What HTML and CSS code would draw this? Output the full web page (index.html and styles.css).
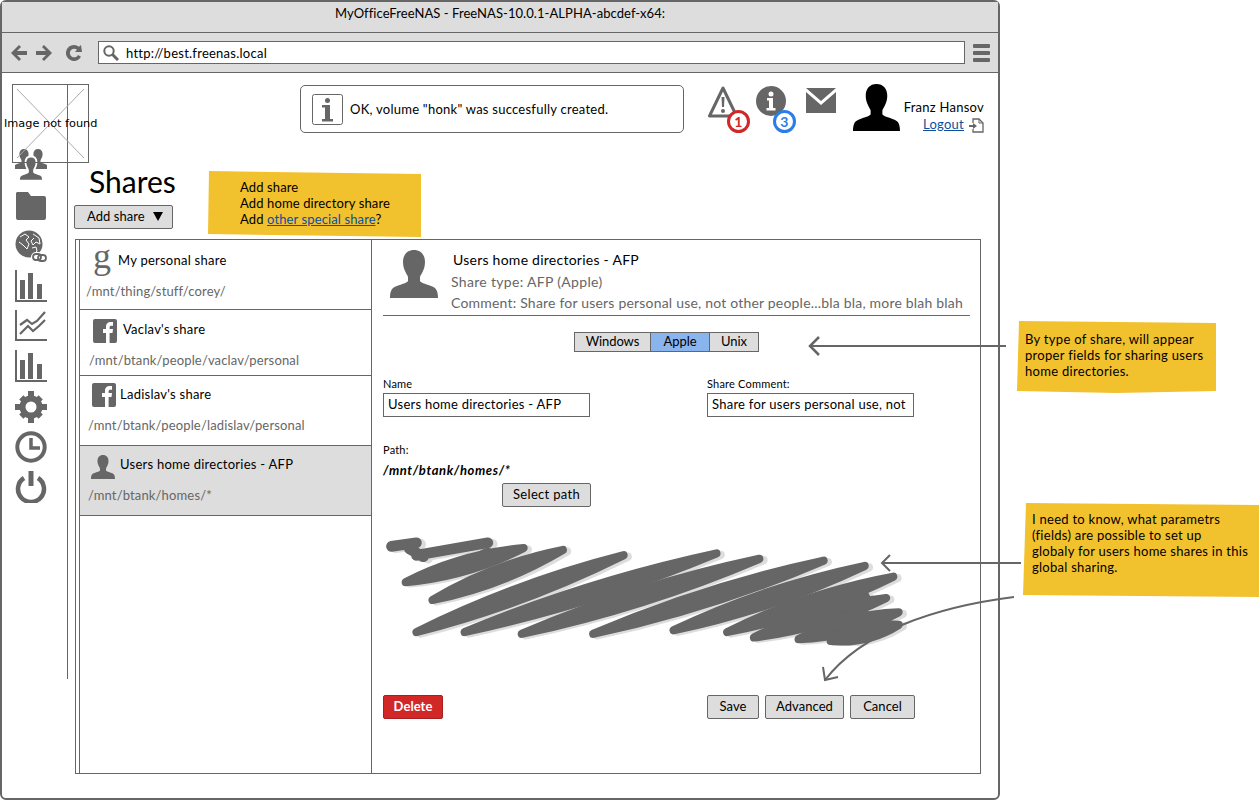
FILE: index.html
```html
<!DOCTYPE html>
<html lang="en">
<head>
<meta charset="UTF-8" />
<title>MyOfficeFreeNAS - Shares</title>
<link rel="stylesheet" href="styles.css">
</head>
<body>

<!-- shared icons -->
<svg class="defs" width="0" height="0">
  <symbol id="person" viewBox="0 0 48 48">
    <path d="M24 0c-7 0-11 5-11 12 0 4 1 7 2.5 10 1 2 2 3.500 2.500 5v4c-1 2-6 3-11 5-4 1.500-7 3-7 12h48c0-9-3-10.500-7-12-5-2-10-3-11-5v-4c.5-1.500 1.500-3 2.500-5C34 19 35 16 35 12c0-7-4-12-11-12z"/>
  </symbol>
  <symbol id="facebook" viewBox="0 0 24 24">
    <rect width="24" height="24" rx="2" fill="#666"/>
    <path fill="#fff" d="M13 24V14h-3v-4h3V7.500C13 4.500 15 3 17.500 3H20v3.800h-1.800c-1.200 0-1.600.6-1.600 1.600V10H20l-.5 4h-2.900v10z"/>
  </symbol>
  <symbol id="bars" viewBox="0 0 32 32">
    <path fill="#666" d="M0 0h2v30h30v2H0zM5 10h5v19H5zM13 3h5v26h-5zM22 14h5v15h-5z"/>
  </symbol>
</svg>

<div class="window">
  <div class="titlebar">MyOfficeFreeNAS - FreeNAS-10.0.1-ALPHA-abcdef-x64:</div>

  <div class="toolbar">
    <svg class="nav-icon" viewBox="0 0 16 16"><path d="M8 0l2 2-4 4h10v4H6l4 4-2 2-8-8z"/></svg>
    <svg class="nav-icon" viewBox="0 0 16 16"><path d="M8 0l-2 2 4 4H0v4h10l-4 4 2 2 8-8z"/></svg>
    <svg class="nav-icon nav-icon--reload" viewBox="0 0 16 16"><path d="M8 0a8 8 0 0 1 5 1.800L15 0l1 7H9l2-2.200A4.300 4.300 0 1 0 12 10l3 1.800A8 8 0 1 1 8 0z"/></svg>
    <div class="address">
      <svg class="search-icon" viewBox="0 0 16 16"><circle cx="6" cy="6" r="4.700" fill="none" stroke="#666" stroke-width="2"/><path d="M9.500 9.500L15 15" stroke="#666" stroke-width="3"/></svg>
      <span>http://best.freenas.local</span>
    </div>
    <div class="menu-icon"><i></i><i></i><i></i></div>
  </div>

  <div class="page">
    <nav class="sidebar">
      <svg class="side-icon" viewBox="0 0 32 32"><g fill="#666"><use href="#person" x="-1" y="0" width="20" height="20"/><use href="#person" x="13" y="0" width="20" height="20"/><use href="#person" x="4" y="7" width="24" height="25" stroke="#fff" stroke-width="3.500"/></g></svg>
      <svg class="side-icon" viewBox="0 0 32 32"><path fill="#666" d="M2 3h11l3 4h13a2 2 0 0 1 2 2v20a2 2 0 0 1-2 2H3a2 2 0 0 1-2-2V4z"/></svg>
      <svg class="side-icon" viewBox="0 0 32 32"><circle cx="14" cy="14" r="13.500" fill="#666"/><path fill="none" stroke="#fff" d="M5 7l5-3 4 3-3 3 3 4-2 5-4-4-4-3M18 4l6 4 1 6-4-2-3 3-2-4 3-3M17 18l4-1 1 4-4 5"/><g fill="none" stroke="#666" stroke-width="1.800"><rect x="18" y="24" width="8" height="6" rx="3" stroke="#fff" stroke-width="4"/><rect x="18" y="24" width="8" height="6" rx="3"/><rect x="23" y="25" width="8" height="6" rx="3"/></g></svg>
      <svg class="side-icon"><use href="#bars"/></svg>
      <svg class="side-icon" viewBox="0 0 32 32"><path fill="#666" d="M0 0h2v29h30v2H0z"/><g fill="none" stroke="#666" stroke-width="2.200"><path d="M5 15l7-5 5 4 5-3 8-9"/><path d="M5 24l8-8 5 5 6-5 6-6"/></g></svg>
      <svg class="side-icon"><use href="#bars"/></svg>
      <svg class="side-icon" viewBox="0 0 32 32"><path fill="#666" d="M13 0h6v7h-6zM13 25h6v7h-6zM0 13h7v6H0zM25 13h7v6h-7zM4.200 8.400l4.200-4.200 5 5-4.200 4.200zM23.600 4.200l4.200 4.200-5 5-4.200-4.200zM4.200 23.600l5-5 4.200 4.200-5 5zM18.600 22.800l4.200-4.200 5 5-4.200 4.200z"/><circle cx="16" cy="16" r="8.500" fill="none" stroke="#666" stroke-width="6"/></svg>
      <svg class="side-icon" viewBox="0 0 32 32"><circle cx="16" cy="16" r="13.700" fill="none" stroke="#666" stroke-width="4"/><path d="M16 7v10h9" fill="none" stroke="#666" stroke-width="3.500"/></svg>
      <svg class="side-icon" viewBox="0 0 32 32"><path d="M9 7a13 13 0 1 0 14 0" fill="none" stroke="#666" stroke-width="4.500"/><path d="M16 0v15" stroke="#666" stroke-width="5"/></svg>
    </nav>

    <main class="main">
      <header class="topbar">
        <div class="notice">
          <svg class="notice__icon" viewBox="0 0 31 31"><rect x=".5" y=".5" width="30" height="30" rx="2" fill="#fff" stroke="#666"/><circle cx="15.500" cy="6.500" r="2.500" fill="#666"/><path fill="#666" d="M10 11h8v14h3v2.500H10V25h3V13.500h-3z"/></svg>
          <span>OK, volume "honk" was succesfully created.</span>
        </div>
        <div class="status status--warn">
          <svg viewBox="0 0 30 32"><path d="M15 2L1.500 30h27z" fill="none" stroke="#666" stroke-width="3" stroke-linejoin="round"/><path d="M13.500 11h3l-.5 10h-2z" fill="#666"/><circle cx="15" cy="25" r="2" fill="#666"/></svg>
          <span class="badge badge--red">1</span>
        </div>
        <div class="status status--info">
          <svg viewBox="0 0 30 30"><circle cx="15" cy="15" r="15" fill="#666"/><circle cx="15" cy="8" r="2.500" fill="#fff"/><path fill="#fff" d="M11 12h6v10h2.500v2.500h-9V22H13v-7.500h-2z"/></svg>
          <span class="badge badge--blue">3</span>
        </div>
        <svg class="mail" viewBox="0 0 30 25"><path fill="#666" d="M0 0h30L15 13zM0 4l15 13L30 4v21H0z"/></svg>
        <svg class="user-photo"><use href="#person"/></svg>
        <div class="user">
          <div>Franz Hansov</div>
          <div class="user__logout">
            <a href="#">Logout</a>
            <svg viewBox="0 0 15 15"><path d="M4 5V1h6l4 4v9H4v-3" fill="none" stroke="#666" stroke-width="1.300"/><path d="M10 1v4h4" fill="none" stroke="#666"/><path d="M0 7h4V5l4 3-4 3V9H0z" fill="#666"/></svg>
          </div>
        </div>
      </header>

      <h1 class="page-title">Shares</h1>
      <button class="btn btn--add">Add share <span class="caret"></span></button>

      <section class="panel">
        <div class="share-list">
          <div class="share share--google">
            <div class="share__head"><span class="g-icon">g</span><span>My personal share</span></div>
            <div class="share__path">/mnt/thing/stuff/corey/</div>
          </div>
          <div class="share share--vaclav">
            <div class="share__head"><svg class="fb-icon"><use href="#facebook"/></svg><span>Vaclav's share</span></div>
            <div class="share__path">/mnt/btank/people/vaclav/personal</div>
          </div>
          <div class="share share--ladislav">
            <div class="share__head"><svg class="fb-icon"><use href="#facebook"/></svg><span class="share__name">Ladislav's share</span></div>
            <div class="share__path">/mnt/btank/people/ladislav/personal</div>
          </div>
          <div class="share share--home">
            <div class="share__head"><svg class="person-icon"><use href="#person"/></svg><span class="share__name">Users home directories - AFP</span></div>
            <div class="share__path">/mnt/btank/homes/*</div>
          </div>
        </div>

        <div class="detail">
          <div class="detail__head">
            <svg class="detail__photo"><use href="#person"/></svg>
            <div class="detail__info">
              <div class="detail__name">Users home directories - AFP</div>
              <div class="detail__type">Share type: AFP (Apple)</div>
              <div class="detail__comment">Comment: Share for users personal use, not other people...bla bla, more blah blah</div>
            </div>
          </div>

          <div class="tabs">
            <span class="tab tab--windows">Windows</span>
            <span class="tab tab--active">Apple</span>
            <span class="tab tab--unix">Unix</span>
          </div>

          <div class="fields">
            <div>
              <div class="field-label">Name</div>
              <div class="input">Users home directories - AFP</div>
            </div>
            <div>
              <div class="field-label">Share Comment:</div>
              <div class="input">Share for users personal use, not</div>
            </div>
          </div>

          <div class="field-label field-label--path">Path:</div>
          <div class="path-value">/mnt/btank/homes/*</div>
          <button class="btn btn--select">Select path</button>

          <svg class="scribble" viewBox="0 0 1568 364">
            <defs>
              <g id="scrawl" stroke-width="23" stroke-linejoin="round" stroke-linecap="round">
                <path d="M100 185q155-79 330-95q-155 79-330 95z"/>
                <path d="M175 235q172-102 365-140q-172 102-365 140z"/>
                <path d="M130 325q280-139 580-215q-280 139-580 215z"/>
                <path d="M265 325q342-142 705-220q-342 142-705 220z"/>
                <path d="M425 330q322-137 665-210q-322 137-665 210z"/>
                <path d="M625 330q312-134 645-205q-312 134-645 205z"/>
                <path d="M850 320q257-122 535-180q-257 122-535 180z"/>
                <path d="M1000 325q222-110 465-155q-222 110-465 155z"/>
                <path d="M1075 340q175-87 370-110q-175 87-370 110z"/>
                <path d="M1200 345q130-70 280-75q-130 70-280 75z"/>
                <path d="M1290 350q85-54 190-45q-85 54-190 45z"/>
                <path d="M60 85l70-10M130 110l200-35M110 92l40 22" fill="none" stroke-width="30"/>
                <path d="M290 130l40-20M1180 290l200-60M1250 310l130-30" fill="none" stroke-width="42"/>
              </g>
            </defs>
            <use href="#scrawl" fill="#ddd" stroke="#ddd" x="12" y="4"/>
            <use href="#scrawl" fill="#666" stroke="#666"/>
          </svg>

          <div class="actions">
            <button class="btn btn--delete">Delete</button>
            <div class="actions__right">
              <button class="btn btn--save">Save</button>
              <button class="btn btn--advanced">Advanced</button>
              <button class="btn btn--cancel">Cancel</button>
            </div>
          </div>
        </div>
      </section>
    </main>
  </div>
</div>

<!-- things lying over the window -->
<div class="broken-img">
  <svg viewBox="0 0 77 79"><path d="M5 5l67 69M72 5L5 74" stroke="#aaa" fill="none"/></svg>
  <span>Image not found</span>
</div>

<div class="note note--add">
  Add share<br>Add home directory share<br>Add <a href="#">other special share</a>?
</div>
<div class="note note--type">
  By type of share, will appear<br>proper fields for sharing users<br>home directories.
</div>
<div class="note note--params">
  I need to know, what parametrs<br>(fields) are possible to set up<br>globaly for users home shares in this<br>global sharing.
</div>

<svg class="arrows" viewBox="0 0 1260 800">
  <g fill="none" stroke="#666" stroke-width="2">
    <path d="M1006 346H810"/>
    <path d="M819 337l-9 9 9 9" stroke-width="2.500"/>
    <path d="M1021 563H882"/>
    <path d="M890 555l-8 8 8 8"/>
    <path d="M1014 597C935 607 862 632 825 680"/>
    <path d="M823 667l2 13 13-3"/>
  </g>
</svg>

</body>
</html>
```
FILE: styles.css
```css
/* Reset */
* {
  box-sizing: border-box;
}

body {
  margin: 0;
  position: relative;
  width: 1260px;
  height: 800px;
  overflow: hidden;
  background: #fff;
  color: #000;
  font-family: 'Lato', 'Open Sans', sans-serif;
  font-size: 13px;
  letter-spacing: .25px;
}

a {
  color: #0b4f9e;
}

.defs {
  position: absolute;
}

/* Browser window */
.window {
  width: 1000px;
  height: 800px;
  border: 2px solid #666;
  border-radius: 6px;
  display: flex;
  flex-direction: column;
}

.titlebar {
  height: 31px;
  padding-top: 3px;
  background: #ddd;
  border-bottom: 1px solid #666;
  text-align: center;
  line-height: 17px;
  letter-spacing: .06px;
}

.toolbar {
  height: 40px;
  background: #ddd;
  border-bottom: 1px solid #666;
  display: flex;
  align-items: center;
  padding-left: 9px;
}

.nav-icon {
  width: 16px;
  height: 16px;
  margin-right: 9px;
  fill: #666;
}

.nav-icon--reload {
  margin-left: 5px;
  margin-right: 16px;
}

.address {
  width: 867px;
  height: 23px;
  background: #fff;
  border: 1px solid #666;
  display: flex;
  align-items: center;
  padding-left: 4px;
  gap: 7px;
}

.search-icon {
  width: 16px;
  height: 16px;
}

.menu-icon {
  margin-left: 8px;
  width: 17px;
  display: flex;
  flex-direction: column;
  gap: 3px;
}

.menu-icon i {
  height: 4px;
  border-radius: 1px;
  background: #666;
}

/* Page */
.page {
  flex: 1;
  display: flex;
  align-items: flex-start;
}

.sidebar {
  width: 66px;
  height: 595px;
  margin-top: 11px;
  flex: none;
  border-right: 1px solid #666;
  padding: 65px 0 0 13px;
  display: flex;
  flex-direction: column;
  gap: 8.3px;
}

.side-icon {
  width: 32px;
  height: 32px;
  flex: none;
}

.main {
  padding: 12px 0 0 6px;
}

.topbar {
  display: flex;
  height: 48px;
  margin-left: 226px;
}

.notice {
  width: 384px;
  height: 48px;
  border: 1px solid #666;
  border-radius: 5px;
  display: flex;
  align-items: center;
  padding-left: 11px;
  gap: 7px;
}

.notice__icon {
  width: 31px;
  height: 31px;
}

.status {
  position: relative;
  flex: none;
}

.status svg {
  display: block;
  width: 100%;
  height: 100%;
}

.status--warn {
  width: 30px;
  height: 32px;
  margin: 1px 0 0 24px;
}

.status--info {
  width: 30px;
  height: 30px;
  margin: 1px 0 0 18px;
}

.badge {
  position: absolute;
  width: 23px;
  height: 23px;
  border-radius: 50%;
  border: 3px solid;
  background: #fff;
  text-align: center;
  font-weight: 700;
  font-size: 14px;
  line-height: 17px;
}

.status--warn .badge {
  left: 19px;
  top: 24px;
}

.status--info .badge {
  top: 24px;
  left: 17px;
}

.badge--red {
  border-color: #d12727;
  color: #d12727;
}

.badge--blue {
  border-color: #2b7de9;
  color: #2b7de9;
}

.mail {
  width: 30px;
  height: 25px;
  margin: 3px 0 0 20px;
  flex: none;
}

.user-photo {
  width: 47px;
  height: 47px;
  margin: -1px 0 0 17px;
  flex: none;
}

.user {
  margin: 14px 0 0 3px;
  width: 81px;
  text-align: right;
  line-height: 17px;
  white-space: nowrap;
}

.user__logout {
  display: flex;
  justify-content: flex-end;
  gap: 5px;
}

.user__logout svg {
  width: 15px;
  height: 15px;
  margin-top: 2px;
}

.page-title {
  margin: 32px 0 0 15px;
  font-size: 30px;
  font-weight: 400;
  line-height: 32px;
  letter-spacing: 0;
}

.btn {
  display: block;
  height: 24px;
  padding: 0 0 2px;
  background: #ddd;
  border: 1px solid #666;
  border-radius: 2px;
  color: #000;
  font: inherit;
  letter-spacing: .05px;
  text-align: center;
}

.btn--add {
  width: 99px;
  margin-top: 8px;
  padding-left: 3px;
}

.caret {
  display: inline-block;
  margin-left: 5px;
  border-left: 5px solid transparent;
  border-right: 5px solid transparent;
  border-top: 9px solid #000;
}

.panel {
  width: 906px;
  height: 535px;
  margin: 10px 0 0 1px;
  border: 1px solid #666;
  padding-left: 3px;
  display: flex;
}

.share-list {
  width: 293px;
  flex: none;
  border-left: 1px solid #666;
  border-right: 1px solid #666;
}

.share {
  border-bottom: 1px solid #666;
  padding-top: 9px;
}

.share__head {
  display: flex;
  align-items: flex-start;
  height: 24px;
  line-height: 20px;
}

.share__path {
  color: #666;
  margin-top: 9px;
  line-height: 16px;
  letter-spacing: .15px;
}

.share--google {
  height: 70px;
  padding-left: 6px;
}

.share--google .share__head {
  padding-left: 7px;
  gap: 10px;
  margin-top: 1px;
}

.share--google .share__path {
  margin-top: 9px;
}

.share--vaclav {
  height: 66px;
  padding-left: 9px;
}

.share--vaclav .share__head {
  padding-left: 4px;
  gap: 6px;
}

.share--ladislav {
  height: 70px;
  padding-left: 8px;
  padding-top: 7px;
}

.share--ladislav .share__head {
  padding-left: 4px;
  gap: 4px;
}

.share--ladislav .share__name {
  margin-top: 1px;
}

.share--ladislav .share__path {
  margin-top: 10px;
}

.share--home {
  height: 70px;
  padding-left: 8px;
  background: #ddd;
}

.share--home .share__head {
  padding-left: 3px;
  gap: 5px;
}

.share--home .share__name {
  margin-top: -1px;
}

.share--home .share__path {
  margin-top: 8px;
}

.g-icon {
  width: 15px;
  font-family: 'Liberation Serif', serif;
  font-size: 36px;
  line-height: 24px;
  color: #666;
  transform: translateY(-6px);
}

.fb-icon {
  width: 24px;
  height: 24px;
}

.person-icon {
  width: 24px;
  height: 24px;
  fill: #666;
}

/* Detail */
.detail {
  flex: 1;
  padding: 0 10px 0 11px;
}

.detail__head {
  display: flex;
  height: 76px;
  border-bottom: 1px solid #666;
  padding-left: 7px;
}

.detail__photo {
  width: 48px;
  height: 48px;
  margin-top: 10px;
  fill: #666;
  flex: none;
}

.detail__info {
  margin-left: 13px;
  color: #666;
  font-size: 14px;
  line-height: 21px;
  white-space: nowrap;
}

.detail__name {
  color: #000;
  margin: 9px 0 1px 2px;
}

.detail__type {
  letter-spacing: .32px;
}

.detail__comment {
  letter-spacing: .2px;
}

.tabs {
  display: flex;
  width: 185px;
  height: 20px;
  margin: 16px 0 0 191px;
  border: 1px solid #666;
  background: #ddd;
  line-height: 17px;
  letter-spacing: -.1px;
  text-align: center;
}

.tab--windows {
  width: 76px;
  border-right: 1px solid #666;
}

.tab--active {
  width: 59px;
  background: #8ab4ee;
  border-right: 1px solid #666;
}

.tab--unix {
  flex: 1;
}

.fields {
  display: grid;
  grid-template-columns: 324px 1fr;
  margin-top: 25px;
}

.field-label {
  font-size: 11px;
  line-height: 13px;
  letter-spacing: .2px;
}

.input {
  width: 207px;
  height: 24px;
  margin-top: 3px;
  border: 1px solid #666;
  padding-left: 4px;
  line-height: 21px;
  white-space: nowrap;
  overflow: hidden;
}

.field-label--path {
  margin-top: 26px;
}

.path-value {
  margin-top: 6px;
  font-weight: 700;
  font-style: italic;
  line-height: 16px;
  letter-spacing: .6px;
}

.btn--select {
  width: 89px;
  margin: 5px 0 0 119px;
  letter-spacing: .3px;
}

.scribble {
  display: block;
  width: 560px;
  height: 130px;
  margin: 9px 0 0 -13px;
}

.actions {
  display: grid;
  grid-template-columns: 324px 1fr;
  margin-top: 49px;
}

.actions__right {
  display: flex;
  gap: 6px;
}

.btn--delete {
  width: 60px;
  background: #d12727;
  border-color: #a81f1f;
  color: #fff;
  font-weight: 700;
}

.btn--save {
  width: 52px;
}

.btn--advanced {
  width: 79px;
}

.btn--cancel {
  width: 65px;
}

/* Overlays */
.broken-img {
  position: absolute;
  left: 12px;
  top: 84px;
  width: 77px;
  height: 79px;
  border: 1px solid #666;
}

.broken-img svg {
  position: absolute;
  left: -1px;
  top: -1px;
  width: 77px;
  height: 79px;
}

.broken-img span {
  position: absolute;
  left: -9px;
  top: 32px;
  font-family: 'DejaVu Sans', sans-serif;
  font-size: 11.3px;
  letter-spacing: 0;
  white-space: nowrap;
}

.note {
  position: absolute;
  background: #f2c12e;
  line-height: 16px;
}

.note--add {
  left: 208px;
  top: 171px;
  width: 213px;
  height: 66px;
  padding: 8px 0 0 32px;
  letter-spacing: .12px;
  clip-path: polygon(1px 0, 100% 3px, 100% 100%, 0 63px);
}

.note--type {
  left: 1017px;
  top: 321px;
  width: 199px;
  height: 73px;
  padding: 10px 0 0 8px;
  letter-spacing: .3px;
  clip-path: polygon(2px 0, 100% 2px, 100% 70px, 50% 72px, 0 70px);
}

.note--params {
  left: 1023px;
  top: 503px;
  width: 236px;
  height: 97px;
  padding: 8px 0 0 9px;
  letter-spacing: .27px;
  clip-path: polygon(3px 0, 100% 2px, 100% 94px, 0 92px);
}

.arrows {
  position: absolute;
  left: 0;
  top: 0;
  width: 1260px;
  height: 800px;
  pointer-events: none;
}
```
